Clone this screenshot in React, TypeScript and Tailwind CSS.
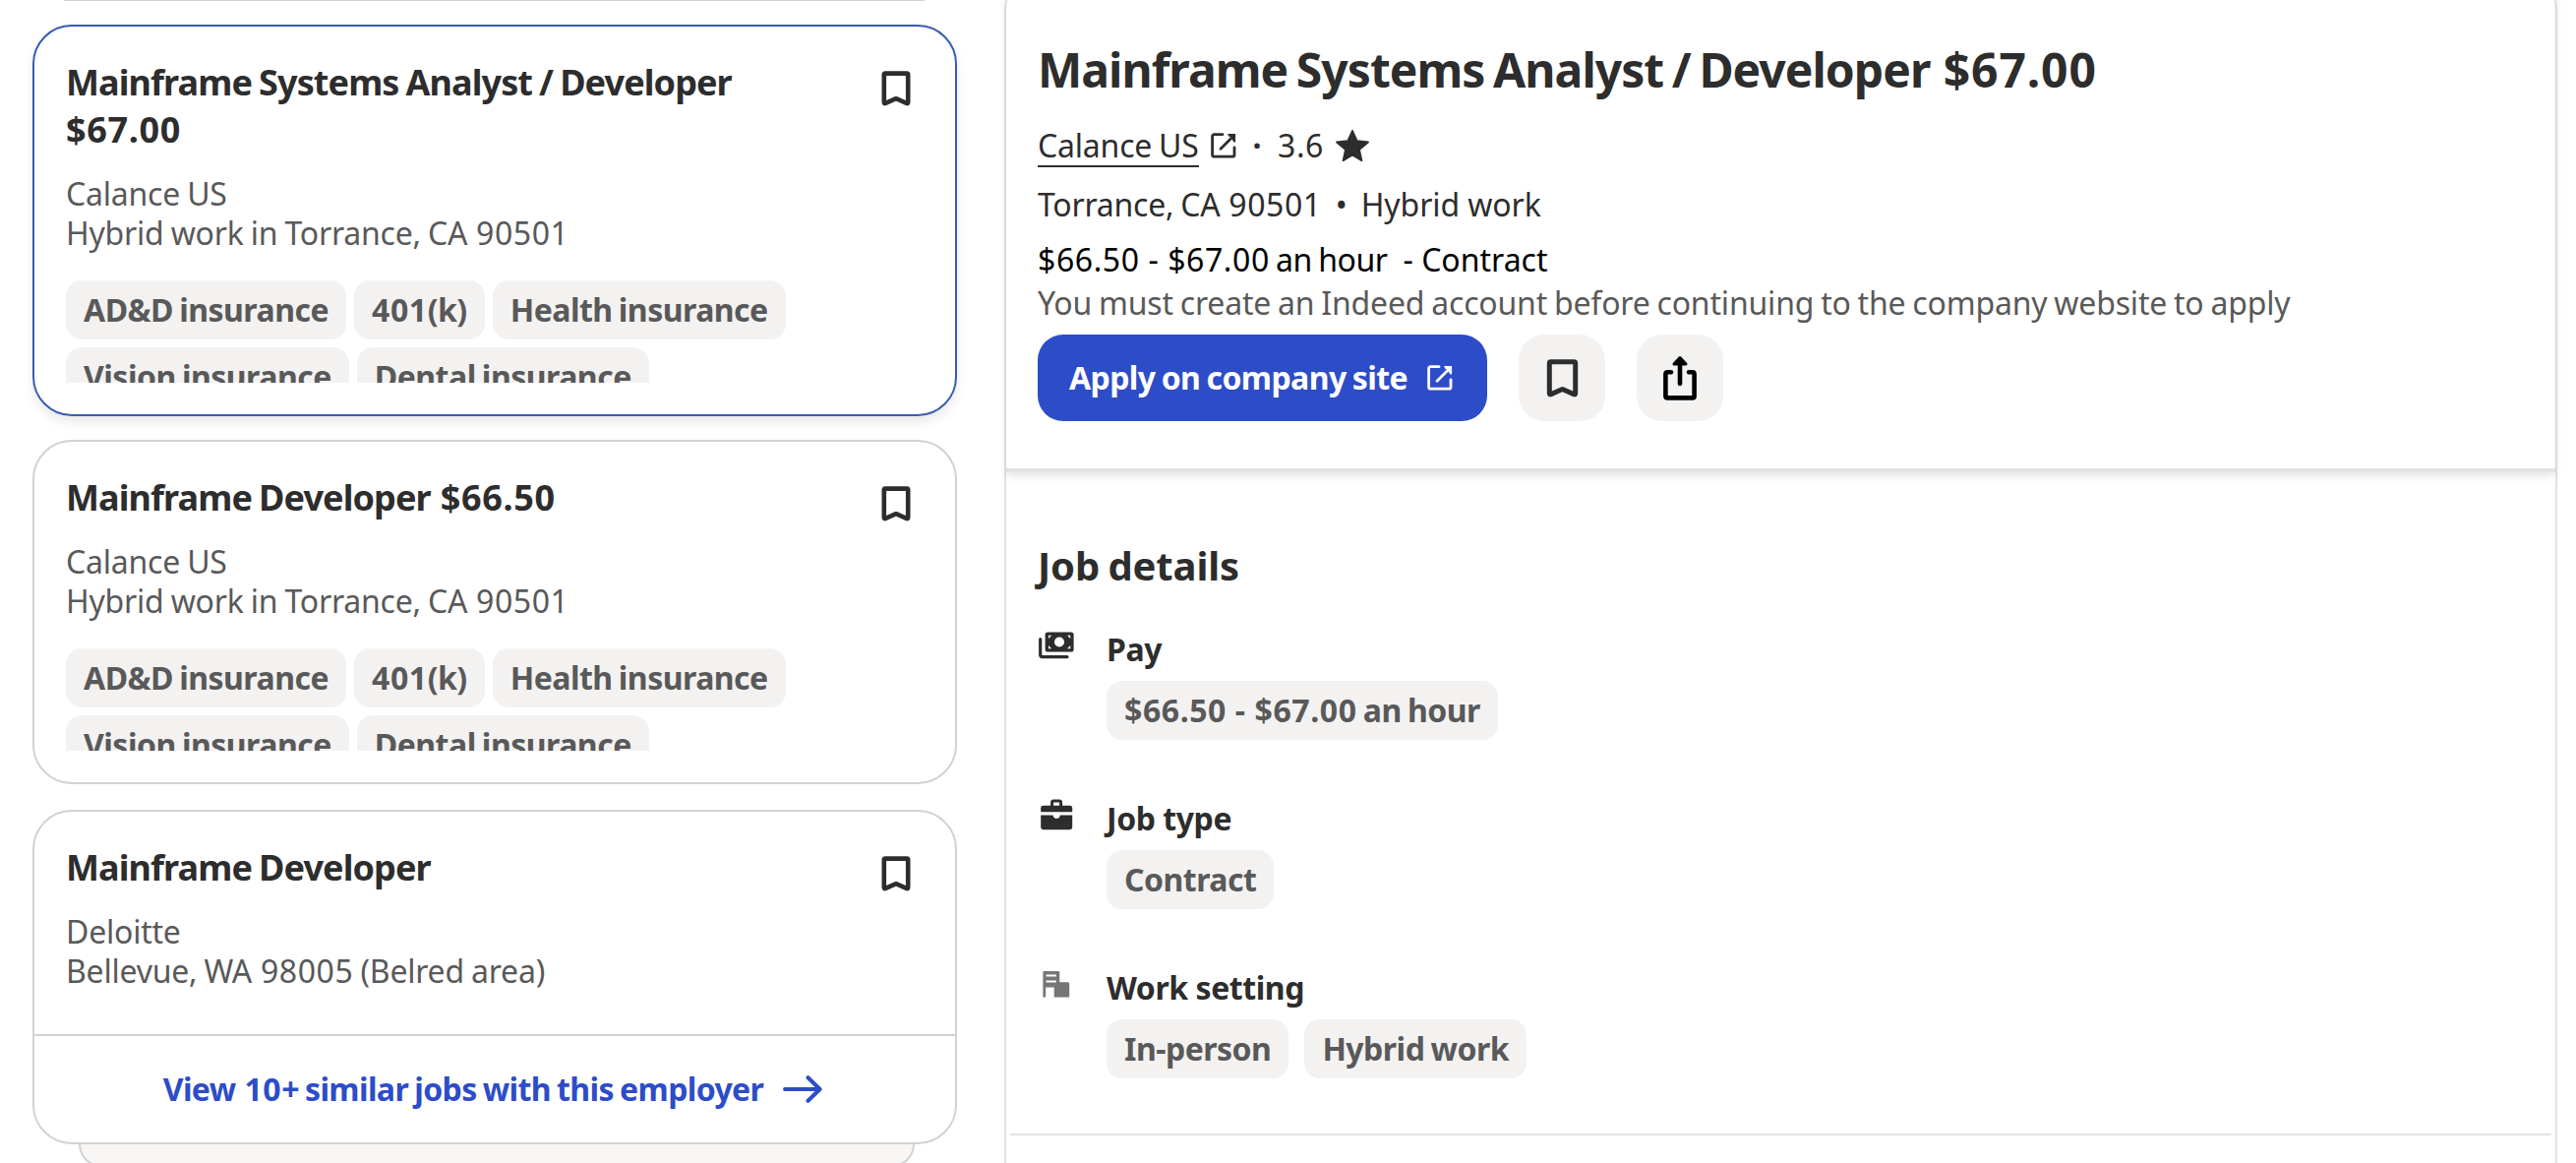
import clsx from "clsx";

type Job = {
  title: string;
  company: string;
  location: string;
  benefits?: string[];
  selected?: boolean;
  similar?: string;
};

const BENEFITS = ["AD&D insurance", "401(k)", "Health insurance", "Vision insurance", "Dental insurance"];

const jobs: Job[] = [
  {
    title: "Mainframe Systems Analyst / Developer $67.00",
    company: "Calance US",
    location: "Hybrid work in Torrance, CA 90501",
    benefits: BENEFITS,
    selected: true,
  },
  {
    title: "Mainframe Developer $66.50",
    company: "Calance US",
    location: "Hybrid work in Torrance, CA 90501",
    benefits: BENEFITS,
  },
  {
    title: "Mainframe Developer",
    company: "Deloitte",
    location: "Bellevue, WA 98005 (Belred area)",
    similar: "View 10+ similar jobs with this employer",
  },
];

// Figures are set a little wider than letters
function Text({ children }: { children: string }) {
  return (
    <>
      {children.split(/((?: -)? ?\$?\d[\d.]*)/).map((part, i) =>
        i % 2 ? (
          <span key={i} className="tracking-[0.018em] [word-spacing:0]">{part}</span>
        ) : (
          part
        )
      )}
    </>
  );
}

function BookmarkIcon({ className }: { className?: string }) {
  return (
    <svg viewBox="0 0 30 36" fill="none" className={className}>
      <path
        d="M4 2.6 H26 Q27.2 2.6 27.2 3.8 V32 Q27.2 33.6 25.6 32.9 L15 28.2 L4.4 32.9 Q2.8 33.6 2.8 32 V3.8 Q2.8 2.6 4 2.6Z"
        stroke="currentColor"
        strokeWidth="4.6"
        strokeLinejoin="round"
      />
    </svg>
  );
}

function ExternalIcon({ className }: { className?: string }) {
  return (
    <svg viewBox="0 0 26 26" fill="none" stroke="currentColor" strokeWidth="2.8" strokeLinecap="round" className={className}>
      <path d="M12 1.7 H3.6 Q1.6 1.7 1.6 3.7 V22.2 Q1.6 24.2 3.6 24.2 H22 Q24 24.2 24 22.2 V15" strokeLinejoin="round" />
      <path d="M10 16.2 L23 3.2" />
      <path d="M17 0.9 H25.1 V9.4 L23.6 9.4 L22 7.4 L22 5.5 L20.5 4 H18.6Z" fill="currentColor" stroke="none" />
    </svg>
  );
}

function ShareIcon() {
  return (
    <svg viewBox="0 0 34 45" fill="none" stroke="currentColor" strokeLinecap="round" className="h-[45px] w-[34px]">
      <path d="M8 16.2 H4.4 Q2.4 16.2 2.4 18.2 V40.4 Q2.4 42.4 4.4 42.4 H29.6 Q31.6 42.4 31.6 40.4 V18.2 Q31.6 16.2 29.6 16.2 H26" strokeWidth="4.6" />
      <path d="M17 5 V28" strokeWidth="4.6" />
      <path d="M17 1.6 L23 8 H11Z" fill="currentColor" strokeWidth="3" strokeLinejoin="round" />
    </svg>
  );
}

function StarIcon() {
  return (
    <svg viewBox="1.5 1.5 21 20" fill="currentColor" stroke="currentColor" strokeWidth="1.1" strokeLinejoin="round" className="h-8 w-[34px]">
      <path d="M12 17.5 L17.9 21 L16.4 14.1 L22 9.3 L14.9 8.5 L12 2 L9.1 8.5 L2 9.3 L7.6 14.1 L6.1 21Z" />
    </svg>
  );
}

function ArrowIcon() {
  return (
    <svg viewBox="0 0 40 28" fill="none" stroke="currentColor" strokeWidth="4" strokeLinecap="round" strokeLinejoin="round" className="h-7 w-10">
      <path d="M2 14 H37 M25.5 2.2 L37.6 14 L25.5 25.8" />
    </svg>
  );
}

function PayIcon() {
  return (
    <svg viewBox="0 0 36 28" className="mt-0.5 ml-px h-7 w-9">
      <path d="M1.7 7.5 V23.6 Q1.7 25.6 3.7 25.6 H29" fill="none" stroke="currentColor" strokeWidth="3.2" strokeLinecap="round" />
      <rect x="6.6" y="0.6" width="29" height="20" rx="2.6" fill="currentColor" />
      <circle cx="21" cy="10.5" r="5" fill="white" />
      <path d="M10 3.8 H13.2 L10 7Z M32.2 3.8 V7 L29 3.8Z M10 17.2 V14 L13.2 17.2Z M32.2 17.2 H29 L32.2 14Z" fill="white" />
    </svg>
  );
}

function BriefcaseIcon() {
  return (
    <svg viewBox="0 0 33 32" fill="currentColor" className="ml-[3px] h-8 w-[33px]">
      <path d="M11.6 8 V3.6 Q11.6 2 13.2 2 H19 Q20.6 2 20.6 3.6 V8" fill="none" stroke="currentColor" strokeWidth="3" />
      <path d="M2.6 6.8 H29.8 Q32.2 6.8 32.2 9.2 V13.3 H0.2 V9.2 Q0.2 6.8 2.6 6.8Z" />
      <path d="M0.2 16.4 H12.6 Q13 19.8 16.2 19.8 Q19.4 19.8 19.8 16.4 H32.2 V28.8 Q32.2 31.2 29.8 31.2 H2.6 Q0.2 31.2 0.2 28.8Z" />
    </svg>
  );
}

function BuildingIcon() {
  return (
    <svg viewBox="0 0 28 27" className="mt-[3px] ml-[5px] h-[27px] w-7 text-[#767676]">
      <path d="M1.5 0 H16 Q17.3 0 17.3 1.3 V11.2 H25.6 Q27.2 11.2 27.2 12.8 V26.6 H11.7 V16.6 H3.2 V26.6 H0.4 V1.3 Q0.4 0 1.5 0Z" fill="currentColor" />
      <path d="M3.6 4.6 H13.8 M3.6 10.4 H13.8" stroke="white" strokeWidth="2" />
    </svg>
  );
}

function Pill({ children }: { children: string }) {
  return (
    <span className="h-[60px] shrink-0 rounded-2xl bg-[#f3f2f1] px-[18px] text-[32px] leading-[60px] font-bold tracking-[-0.016em] whitespace-nowrap text-[#595959] [word-spacing:-0.05em]">
      <Text>{children}</Text>
    </span>
  );
}

function JobCard({ job }: { job: Job }) {
  return (
    <article
      className={clsx(
        "rounded-[40px] border-2 bg-white",
        job.selected ? "border-[#3a5bb4] shadow-[0_6px_12px_rgba(0,0,0,0.09)]" : "border-[#d4d2d0]"
      )}
    >
      <div className={clsx("px-8 pt-[33px]", job.similar ? "pb-11" : "pb-8")}>
        <div className="flex items-start justify-between">
          <h2 className="w-[760px] text-[36px] leading-[48px] font-bold tracking-[-0.025em] text-[#2d2d2d] [word-spacing:-0.04em]">
            <Text>{job.title}</Text>
          </h2>
          <BookmarkIcon className="mt-3 mr-[13px] h-9 w-[30px] text-[#2d2d2d]" />
        </div>
        <div className="mt-[21px] text-[32px] leading-10 tracking-[-0.007em] text-[#595959] [word-spacing:-0.03em]">
          <p><Text>{job.company}</Text></p>
          <p><Text>{job.location}</Text></p>
        </div>
        {job.benefits && (
          <div className="mt-7 flex h-[104px] w-[800px] flex-wrap content-start gap-2 overflow-hidden">
            {job.benefits.map((b) => (
              <Pill key={b}>{b}</Pill>
            ))}
          </div>
        )}
      </div>
      {job.similar && (
        <a href="#similar" className="flex h-[110px] items-center justify-center gap-5 border-t-2 border-[#d4d2d0] pr-1 text-[32px] font-bold tracking-[-0.019em] text-[#2d4cc8] [word-spacing:-0.05em]">
          <span><Text>{job.similar}</Text></span>
          <ArrowIcon />
        </a>
      )}
    </article>
  );
}

function DetailRow({ icon, label, values }: { icon: React.ReactNode; label: string; values: string[] }) {
  return (
    <div className="flex">
      <div className="w-[70px] shrink-0">{icon}</div>
      <div>
        <h3 className="text-[32px] leading-10 font-bold tracking-[-0.014em]">{label}</h3>
        <div className="mt-3 flex gap-4">
          {values.map((v) => (
            <Pill key={v}>{v}</Pill>
          ))}
        </div>
      </div>
    </div>
  );
}

export default function App() {
  return (
    <div className="flex h-[1182px] w-[2619px] overflow-hidden bg-white font-['Noto_Sans',sans-serif] text-[#2d2d2d]">
      {/* Job list */}
      <div className="ml-[33px] w-[940px] shrink-0">
        <div className="mr-[33px] ml-8 h-px bg-[#d4d2d0]" />
        <div className="mt-6 flex flex-col gap-6">
          <JobCard job={jobs[0]} />
          <JobCard job={jobs[1]} />
          <div className="mt-0.5">
            <JobCard job={jobs[2]} />
            <div className="mr-[43px] ml-[47px] h-[23px] rounded-b-3xl border-2 border-t-0 border-[#d4d2d0] bg-[#f7f6f5]" />
          </div>
        </div>
      </div>

      {/* Job detail */}
      <div className="-mt-[22px] ml-12 h-[1300px] w-[1579px] shrink-0 rounded-t-[32px] border-2 border-[#e4e2e0]">
        <header className="border-b-4 border-[#e4e2e0] px-8 pt-[61px] pb-12 shadow-[0_4px_8px_rgba(0,0,0,0.1)]">
          <h1 className="text-[48px] leading-[60px] font-bold tracking-[-0.02em] [word-spacing:-0.06em]">
            <Text>Mainframe Systems Analyst / Developer $67.00</Text>
          </h1>
          <div className="mt-[27px] flex h-[60px] items-start text-[32px] leading-10 tracking-[-0.006em] [word-spacing:-0.04em]">
            <a href="#company" className="w-[164px] border-b-2 border-[#2d2d2d] whitespace-nowrap">Calance US</a>
            <ExternalIcon className="mt-[7px] ml-3 h-[26px] w-[26px]" />
            <span className="w-[42px] text-center font-bold">·</span>
            <span className="w-[59px]"><Text>3.6</Text></span>
            <div className="mt-1"><StarIcon /></div>
          </div>
          <div className="flex h-14 text-[32px] leading-10">
            <span className="tracking-[-0.007em] [word-spacing:-0.04em]"><Text>Torrance, CA 90501</Text></span>
            <span className="w-10 text-center">•</span>
            <span className="tracking-[-0.003em]">Hybrid work</span>
          </div>
          <p className="flex h-11 gap-4 text-[32px] leading-10 text-black">
            <span className="tracking-[-0.014em] [word-spacing:-0.05em]"><Text>$66.50 - $67.00 an hour</Text></span>
            <span>- Contract</span>
          </p>
          <p className="h-[52px] text-[32px] leading-10 tracking-[-0.0055em] text-[#595959] [word-spacing:-0.04em]">
            You must create an Indeed account before continuing to the company website to apply
          </p>
          <div className="flex gap-8">
            <button className="flex h-[88px] w-[457px] items-center justify-between rounded-[26px] bg-[#2d4cc8] pr-[35px] pl-8 text-[32px] font-bold tracking-[-0.018em] text-white [word-spacing:-0.05em]">
              <span>Apply on company site</span>
              <ExternalIcon className="h-[26px] w-[26px]" />
            </button>
            <button className="flex h-[88px] w-[88px] items-center justify-center rounded-[26px] bg-[#f3f2f1]">
              <BookmarkIcon className="h-[39px] w-[33px]" />
            </button>
            <button className="flex h-[88px] w-[88px] items-center justify-center rounded-[26px] bg-[#f3f2f1] text-black">
              <ShareIcon />
            </button>
          </div>
        </header>

        <section className="mx-1 border-b-2 border-[#e4e2e0] px-7 pt-[71px] pb-14">
          <h2 className="text-[40px] leading-[48px] font-bold tracking-[-0.003em] [word-spacing:-0.05em]">Job details</h2>
          <div className="mt-[41px] flex flex-col gap-[60px]">
            <DetailRow icon={<PayIcon />} label="Pay" values={["$66.50 - $67.00 an hour"]} />
            <DetailRow icon={<BriefcaseIcon />} label="Job type" values={["Contract"]} />
            <DetailRow icon={<BuildingIcon />} label="Work setting" values={["In-person", "Hybrid work"]} />
          </div>
        </section>
      </div>
    </div>
  );
}
